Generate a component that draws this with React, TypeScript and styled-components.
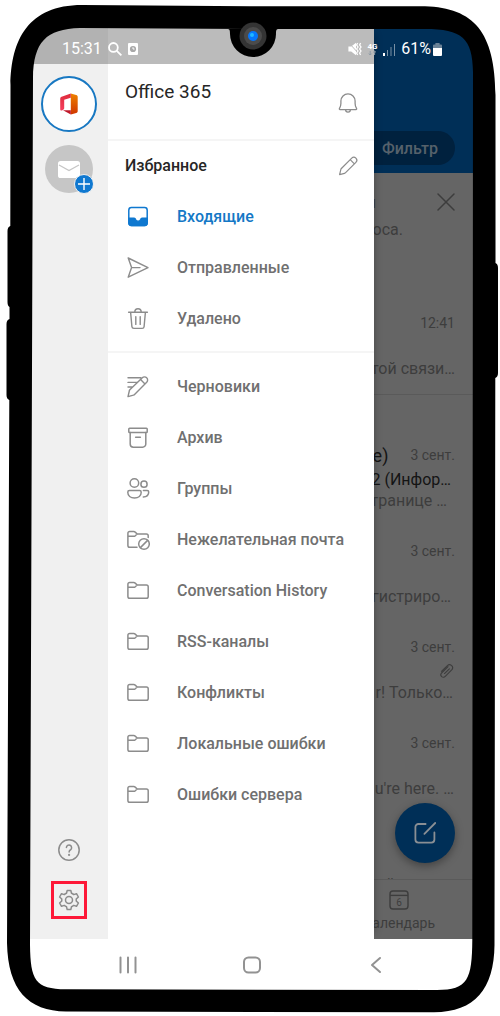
import React from 'react';
import styled, { createGlobalStyle, css } from 'styled-components';

const GlobalStyle = createGlobalStyle`
  *, *::before, *::after { box-sizing: border-box; }
  body {
    margin: 0;
    background: #fff;
    font-family: Roboto, "Noto Sans", sans-serif;
    font-size: 16px;
    color: #212121;
  }
  button { font: inherit; color: inherit; background: none; border: 0; padding: 0; cursor: pointer; }
  ul { list-style: none; margin: 0; padding: 0; }
  h1, h2, p { margin: 0; font-weight: 400; }
  svg { display: block; flex: none; }
`;

/* ---------- device ---------- */

const Device = styled.div`
  position: relative;
  display: flex;
  min-height: 100vh;
  padding: 28px 27px 26px 30px;
`;

const FrameDrawing = styled.svg`
  position: absolute;
  inset: 0;
  width: 100%;
  height: 100%;
  z-index: 5;
  pointer-events: none;
`;

const Camera = styled.svg`
  position: absolute;
  top: 8px;
  left: 50%;
  margin-left: -22px;
  z-index: 6;
`;

const Screen = styled.div`
  position: relative;
  flex: 1;
  min-width: 0;
  display: flex;
  flex-direction: column;
  overflow: hidden;
  border-radius: 30px;
`;

const StatusBar = styled.header`
  position: absolute;
  z-index: 4;
  top: 0;
  left: 0;
  right: 0;
  height: 36px;
  padding: 6px 31px 0 32px;
  display: flex;
  align-items: center;
  justify-content: space-between;
  color: #fff;
  line-height: 20px;
`;

const StatusGroup = styled.div<{ $gap: number }>`
  display: flex;
  align-items: center;
  gap: ${(p) => p.$gap}px;
`;

const Panels = styled.div`
  flex: 1;
  display: flex;
  overflow: hidden;
`;

/* ---------- account rail ---------- */

const Rail = styled.aside`
  width: 78px;
  flex: none;
  display: flex;
  flex-direction: column;
  align-items: center;
  border-top: 36px solid #b2b2b2;
  background: #f0f0f0;
  padding: 12px 0 20px;
  color: #8c8c8c;
`;

const Account = styled.button`
  width: 56px;
  height: 56px;
  display: grid;
  place-items: center;
  border: 2px solid #1878c2;
  border-radius: 50%;
  background: #fff;
`;

const AddAccount = styled.button`
  position: relative;
  width: 48px;
  height: 48px;
  margin-top: 13px;
  display: grid;
  place-items: center;
  border-radius: 50%;
  background: #c6c6c6;
`;

const AddBadge = styled.span`
  position: absolute;
  right: -1px;
  bottom: -1px;
  width: 20px;
  height: 20px;
  display: grid;
  place-items: center;
  border: 1px solid #f0f0f0;
  border-radius: 50%;
  background: #0f78d0;
`;

const RailButton = styled.button<{ $push?: boolean; $marked?: boolean }>`
  width: 36px;
  height: 38px;
  display: grid;
  place-items: center;
  ${(p) => p.$push && css`margin-top: auto; margin-bottom: 12px;`}
  ${(p) => p.$marked && css`border: 3px solid #fd1838;`}
`;

/* ---------- drawer ---------- */

const Drawer = styled.section`
  width: 266px;
  flex: none;
  z-index: 1;
  border-top: 36px solid #bbb;
  background: #fff;
  box-shadow: 6px 0 8px -6px rgba(0, 0, 0, 0.3);
`;

const DrawerHead = styled.div`
  height: 77px;
  padding: 16px 14px 0 17px;
  display: flex;
  justify-content: space-between;
  border-bottom: 2px solid #f5f5f5;
  color: #8c8c8c;
`;

const AccountName = styled.h1`
  font-size: 19px;
  line-height: 24px;
  color: #262626;
`;

const BellButton = styled.button`
  align-self: flex-start;
  margin-top: 11px;
`;

const FavouritesHead = styled.div`
  height: 50px;
  padding: 0 14px 0 17px;
  display: flex;
  align-items: center;
  justify-content: space-between;
  color: #8c8c8c;
`;

const SectionTitle = styled.h2`
  font-size: 16px;
  font-weight: 500;
  line-height: 24px;
  color: #262626;
`;

const FolderList = styled.ul`
  & + & {
    margin-top: 7px;
    padding-top: 8px;
    border-top: 2px solid #f5f5f5;
  }
`;

const FolderButton = styled.button<{ $active?: boolean }>`
  width: 100%;
  height: 51px;
  padding: 0 18px;
  display: flex;
  align-items: center;
  gap: 27px;
  font-weight: 500;
  line-height: 24px;
  white-space: nowrap;
  color: ${(p) => (p.$active ? '#1478c6' : '#707070')};
  svg { color: ${(p) => (p.$active ? '#0f78d0' : '#8c8c8c')}; }
`;

/* ---------- dimmed inbox ---------- */

const Inbox = styled.main`
  flex: 1;
  min-width: 0;
  display: flex;
  flex-direction: column;
  background: #656565;
  color: #3d3d3d;
  white-space: nowrap;
  overflow: hidden;
`;

const InboxHead = styled.div`
  height: 145px;
  flex: none;
  padding: 0 18px 8px 0;
  display: flex;
  align-items: flex-end;
  justify-content: flex-end;
  background: #002f57;
`;

const FilterButton = styled.button`
  height: 34px;
  flex: none;
  padding: 0 17px 0 36px;
  border-radius: 17px;
  background: #00213e;
  color: #56616b;
  font-weight: 500;
`;

const Notice = styled.div`
  height: 125px;
  flex: none;
  padding: 17px 15px 0 0;
`;

const NoticeRow = styled.div`
  display: flex;
  justify-content: flex-end;
  align-items: center;
  gap: 58px;
  height: 24px;
`;

const NoticeText = styled.p`
  display: flex;
  justify-content: flex-end;
  padding-right: 55px;
  line-height: 32px;
`;

const GroupGap = styled.div`
  height: 36px;
  flex: none;
  border-top: 1px solid #5a5a5a;
`;

const MessageList = styled.div`
  flex: 1 1 0;
  min-height: 0;
  overflow: hidden;
`;

const Message = styled.article`
  height: 96px;
  padding: 13px 18px 0 0;
`;

const Line = styled.div<{ $dark?: boolean; $low?: boolean; $inset?: number }>`
  display: flex;
  justify-content: flex-end;
  align-items: center;
  gap: 22px;
  height: ${(p) => (p.$low ? 18 : 24)}px;
  padding-right: ${(p) => p.$inset ?? 0}px;
  color: ${(p) => (p.$dark ? '#141414' : 'inherit')};
  & > * { flex: none; }
`;

const Sender = styled.span`
  font-size: 18px;
  color: #141414;
`;

const Time = styled.time`
  font-size: 14px;
  color: #3d3d3d;
`;

const ComposeButton = styled.button`
  position: absolute;
  right: 18px;
  bottom: 127px;
  width: 60px;
  height: 60px;
  display: grid;
  place-items: center;
  border-radius: 50%;
  background: #002f57;
  color: #8a8f94;
  box-shadow: 0 3px 8px rgba(0, 0, 0, 0.35);
`;

const Tabs = styled.nav`
  height: 60px;
  flex: none;
  display: flex;
  justify-content: flex-end;
  padding: 4px 38px 0 0;
  border-top: 1px solid #5a5a5a;
`;

const TabButton = styled.button`
  flex: none;
  display: flex;
  flex-direction: column;
  align-items: center;
  justify-content: center;
  gap: 3px;
  font-size: 14px;
  line-height: 20px;
`;

/* ---------- system navigation ---------- */

const SystemNav = styled.nav`
  height: 51px;
  flex: none;
  padding: 0 85px 0 86px;
  display: flex;
  align-items: center;
  justify-content: space-between;
  background: #fff;
  color: #929292;
`;

/* ---------- icons ---------- */

const Icon = ({ size = 24, width = 1.5, children }: { size?: number; width?: number; children: React.ReactNode }) => (
  <svg width={size} height={size} viewBox="0 0 24 24" fill="none" stroke="currentColor" strokeWidth={width} strokeLinecap="round" strokeLinejoin="round" aria-hidden="true">
    {children}
  </svg>
);

const InboxIcon = () => (
  <Icon>
    <rect x="2.8" y="2.6" width="18.4" height="17.8" rx="2.6" />
    <path d="M3 13.2h5.2c.9 0 1.1.6 1.3 1.2.4 1.1 1.3 1.900 2.600 1.900s2.200-.8 2.600-1.900c.2-.6.4-1.200 1.300-1.200h5.200v4.600a2.600 2.600 0 0 1-2.600 2.600h-13A2.600 2.600 0 0 1 3 17.800z" fill="currentColor" />
  </Icon>
);
const SentIcon = () => (
  <Icon width={1.4}><path d="M2.2 2 22 11.600 2.200 21.200 5.600 11.600zM5.600 11.600H14" /></Icon>
);
const TrashIcon = () => (
  <Icon width={1.4}><path d="M2.6 5.200h18.800M8.800 5a3.200 3.200 0 0 1 6.400 0M4.600 5.200l1.300 14.400a2 2 0 0 0 2 1.800h8.200a2 2 0 0 0 2-1.800l1.300-14.400M9.800 9.600v7.800M14.200 9.600v7.800" /></Icon>
);
const DraftsIcon = () => (
  <Icon width={1.4}><path d="M2 2.800h13M2 7.400h9M2 12h4.600M2 21.600l1.300-5.600c.1-.6.4-1 .8-1.400L16.300 2.800a3 3 0 0 1 4.400 0 3.100 3.100 0 0 1 0 4.400L8.800 19.200c-.4.400-.8.700-1.400.9zM14.600 4.500l4.400 4.400" /></Icon>
);
const ArchiveIcon = () => (
  <Icon><rect x="2.8" y="2.2" width="18.4" height="4.400" rx=".8" /><path d="M4.2 6.600v11.400a3.200 3.200 0 0 0 3.200 3.200h9.200a3.200 3.200 0 0 0 3.200-3.200V6.600M9.600 11.200h4.800" /></Icon>
);
const GroupsIcon = () => (
  <Icon><circle cx="8.400" cy="6" r="4.300" /><circle cx="18" cy="7.200" r="3.100" /><path d="M3.4 13.600h10.200c1 0 1.600.6 1.600 1.600 0 3.600-2.800 5.800-6.700 5.800s-6.700-2.200-6.700-5.800c0-1 .6-1.600 1.600-1.600zM17.400 13.600h3.800c1 0 1.500.6 1.500 1.500 0 3-2 4.900-5.400 4.900" /></Icon>
);
const FolderIcon = () => (
  <Icon><path d="M1.9 9.200V5.400c0-1.100.7-1.800 1.800-1.800h4.100c.5 0 1 .2 1.400.5l2 1.900h9.200c1.100 0 1.800.7 1.800 1.800v9.600c0 1.100-.7 1.800-1.800 1.800H3.700c-1.100 0-1.800-.7-1.800-1.800zM2 8.300h5.800c.5 0 1-.2 1.400-.5l2-1.800" /></Icon>
);
const JunkIcon = () => (
  <Icon><path d="M11 19.200H3.700c-1.100 0-1.800-.7-1.800-1.800V5.400c0-1.100.7-1.800 1.800-1.800h4.100c.5 0 1 .2 1.400.5l2 1.900h9.200c1.100 0 1.800.7 1.800 1.800v1.600M2 8.300h5.800c.5 0 1-.2 1.400-.5l2-1.800" /><circle cx="18" cy="16" r="5.300" /><path d="m14.400 19.600 7.200-7.200" /></Icon>
);
const BellIcon = () => (
  <Icon width={1.3}><path d="M4 18.600c-.6 0-.8-.5-.6-1 .9-1.600 1.500-3 1.500-5.200V10a7.100 7.100 0 0 1 14.200 0v2.400c0 2.200.6 3.600 1.500 5.200.2.500 0 1-.6 1zM9.600 18.800a2.400 2.400 0 0 0 4.800 0" /></Icon>
);
const PencilIcon = () => (
  <Icon width={1.2}><path d="m3.600 20.600 1.200-5c.1-.4.3-.8.6-1.100L15.700 4.100a2.900 2.900 0 0 1 4.200 4.200L9.600 18.700c-.3.300-.7.500-1.100.6zM14.200 5.700l4.200 4.200" /></Icon>
);
const HelpIcon = () => (
  <Icon><circle cx="12" cy="12" r="10.200" /><path d="M9.400 9.600a2.600 2.600 0 1 1 4.300 2c-.9.8-1.600 1.200-1.600 2.500" /><circle cx="12.1" cy="16.900" r=".4" fill="currentColor" /></Icon>
);
const GearIcon = () => (
  <Icon><circle cx="12" cy="12" r="3.500" /><path d="M10.200 2.400h3.600l.7 2.900a7 7 0 0 1 2.200 1.300l2.800-.9 1.900 3.300-2.200 2a7 7 0 0 1 0 2l2.200 2-1.900 3.300-2.800-.9a7 7 0 0 1-2.200 1.300l-.7 2.900h-3.600l-.7-2.900a7 7 0 0 1-2.200-1.300l-2.800.9L2.600 15l2.200-2a7 7 0 0 1 0-2L2.600 9l1.900-3.300 2.800.9a7 7 0 0 1 2.200-1.300z" /></Icon>
);
const CloseIcon = () => <Icon width={1.5}><path d="m4 4 16 16M20 4 4 20" /></Icon>;
const ClipIcon = () => (
  <Icon size={16} width={1.6}><path d="m3.600 12.400 9-8.400a4.600 4.600 0 0 1 7.200 5.600L9.400 20.200a3.800 3.800 0 0 1-5.600-5.200l9.800-9.400M8.200 15.800l7.400-7" /></Icon>
);
const ComposeIcon = () => (
  <Icon width={1.8}><path d="M12.600 3H5.400A3 3 0 0 0 2.400 6v12.600a3 3 0 0 0 3 3h13a3 3 0 0 0 3-3v-7.200M11.400 12.800 22.200 2" /></Icon>
);
const CalendarIcon = () => (
  <svg width="20" height="20" viewBox="0 0 20 20" fill="none" stroke="currentColor" strokeWidth="1.400" aria-hidden="true">
    <rect x="1" y="1" width="18" height="18" rx="3" />
    <path d="M1 5.400h18" />
    <text x="10" y="15.600" textAnchor="middle" fontSize="10" fontFamily="Roboto, sans-serif" fill="currentColor" stroke="none">6</text>
  </svg>
);
const OfficeLogo = () => (
  <svg width="18" height="22" viewBox="0 0 18 22" aria-hidden="true">
    <defs>
      <linearGradient id="officeRight" x1="0" y1="0" x2="0" y2="1"><stop offset="0" stopColor="#ee8200" /><stop offset="1" stopColor="#cf3400" /></linearGradient>
      <linearGradient id="officeLeft" x1="0" y1="0" x2="0" y2="1"><stop offset="0" stopColor="#de2b3c" /><stop offset="1" stopColor="#f5405e" /></linearGradient>
    </defs>
    <path d="M10.800.4 16.200 2c1 .3 1.500 1 1.500 2v14c0 1-.5 1.700-1.500 2l-5.400 1.600z" fill="url(#officeRight)" />
    <path d="M10.800.4v4.400L4.200 6.800v8.400c0 .6-.2 1-.7 1.300l-1.500.9C1 17.900.2 17.200.2 16.200V6c0-1.100.5-1.800 1.400-2.200z" fill="url(#officeLeft)" />
    <path d="M3 17.300h7.800v4.300z" fill="#c0182a" />
  </svg>
);
const MailIcon = () => (
  <svg width="22" height="17" viewBox="0 0 22 17" aria-hidden="true">
    <rect width="22" height="17" rx="2.600" fill="#fff" />
    <path d="m1 4 10 5.600L21 4" fill="none" stroke="#c6c6c6" strokeWidth="1.300" />
  </svg>
);
const PlusIcon = () => (
  <svg width="14" height="14" viewBox="0 0 14 14" fill="none" stroke="#fff" strokeWidth="1.400" aria-hidden="true"><path d="M7 1v12M1 7h12" /></svg>
);
const SearchGlyph = () => (
  <svg width="14" height="14" viewBox="0 0 14 14" fill="none" stroke="#fff" strokeWidth="1.800" aria-hidden="true"><circle cx="5.400" cy="5.400" r="4.400" /><path d="m8.800 8.800 4.600 4.600" /></svg>
);
const ClockGlyph = () => (
  <svg width="10" height="12" viewBox="0 0 10 12" aria-hidden="true"><rect width="10" height="12" rx="1" fill="#fff" /><circle cx="5" cy="6" r="3.100" fill="#a8a8a8" /><path d="M5 4.200V6h1.600" fill="none" stroke="#fff" /></svg>
);
const MuteGlyph = () => (
  <svg width="14" height="14" viewBox="0 0 14 14" aria-hidden="true">
    <path d="M.4 4.400h2.800L8 .8v12.400L3.200 9.600H.4z" fill="#fff" />
    <path d="m1 1 11 12" stroke="#bbb" strokeWidth="1" />
    <path d="m9.600 1-1 2 1.400 2-1.400 2 1.400 2-1.400 2 1 2M12.600 1l-1 2 1.400 2-1.400 2 1.400 2-1.400 2 1 2" fill="none" stroke="#fff" strokeWidth="1.300" />
  </svg>
);
const NetworkGlyph = () => (
  <svg width="11" height="14" viewBox="0 0 11 14" aria-hidden="true">
    <text x="5.500" y="7" textAnchor="middle" fontSize="8" fontWeight="700" fontFamily="Roboto, sans-serif" fill="#fff">4G</text>
    <path d="M3.200 9v4M1.800 11.600 3.200 13l1.400-1.400M7.600 13V9M6.200 10.400 7.600 9 9 10.400" fill="none" stroke="#8d9aa5" />
  </svg>
);
const SignalGlyph = () => (
  <svg width="13" height="13" viewBox="0 0 13 13" aria-hidden="true">
    <path d="M0 10h2v3H0z" fill="#fff" />
    <path d="M4 7h1v6H4zM7.500 4h1v9h-1zM11 1h1v12h-1z" fill="#7890a4" />
  </svg>
);
const BatteryGlyph = () => (
  <svg width="9" height="13" viewBox="0 0 9 13" aria-hidden="true">
    <path d="M2.400 0h4.200v1.500H8a1 1 0 0 1 1 1V5H0V2.500a1 1 0 0 1 1-1h1.400z" fill="#6a8297" />
    <path d="M0 5h9v7a1 1 0 0 1-1 1H1a1 1 0 0 1-1-1z" fill="#fff" />
  </svg>
);

/* ---------- data ---------- */

type Folder = { name: string; icon: () => React.ReactElement; active?: boolean };

const favourites: Folder[] = [
  { name: 'Входящие', icon: InboxIcon, active: true },
  { name: 'Отправленные', icon: SentIcon },
  { name: 'Удалено', icon: TrashIcon },
];

const folders: Folder[] = [
  { name: 'Черновики', icon: DraftsIcon },
  { name: 'Архив', icon: ArchiveIcon },
  { name: 'Группы', icon: GroupsIcon },
  { name: 'Нежелательная почта', icon: JunkIcon },
  { name: 'Conversation History', icon: FolderIcon },
  { name: 'RSS-каналы', icon: FolderIcon },
  { name: 'Конфликты', icon: FolderIcon },
  { name: 'Локальные ошибки', icon: FolderIcon },
  { name: 'Ошибки сервера', icon: FolderIcon },
];

type Mail = { time?: string; sender?: string; subject?: string; preview: string; inset?: number; clip?: boolean };

const mails: Mail[] = [
  { time: '3 сент.', sender: 'е)', subject: '2 (Инфор…', preview: 'транице …', inset: 8 },
  { time: '3 сент.', preview: 'гистриро…', inset: 4 },
  { time: '3 сент.', clip: true, preview: 'r! Только…', inset: 2 },
  { time: '3 сент.', preview: "u're here. …", inset: 1 },
  { preview: 'й', inset: 60 },
];

const MailRow = ({ mail }: { mail: Mail }) => (
  <Message>
    <Line>
      {mail.sender && <Sender>{mail.sender}</Sender>}
      {mail.time && <Time>{mail.time}</Time>}
    </Line>
    <Line $dark={!mail.clip} $inset={mail.clip ? 0 : 4}>
      {mail.subject && <span>{mail.subject}</span>}
      {mail.clip && <ClipIcon />}
    </Line>
    <Line $low $inset={mail.inset}><span>{mail.preview}</span></Line>
  </Message>
);

const Folders = ({ items }: { items: Folder[] }) => (
  <FolderList>
    {items.map(({ name, icon: Glyph, active }) => (
      <li key={name}>
        <FolderButton $active={active}><Glyph />{name}</FolderButton>
      </li>
    ))}
  </FolderList>
);

export default function App() {
  return (
    <>
      <GlobalStyle />
      <Device>
        <FrameDrawing viewBox="0 0 500 1016" preserveAspectRatio="none" aria-hidden="true">
          <path
            fillRule="evenodd"
            d="M10.500 85C11 40 28 5 82 5L250 6.300H425C474 8 495 32 495.500 95V263Q498 264 498 268V373Q498 377 495.300 378L494.500 945C494 989 475 1012 434 1012.300L66 1011.500C28 1011 8 990 7 943L9.300 400Q6.500 399 6.500 395V324Q6.500 320 9.500 319V307Q7.500 306 7.500 302V231Q7.500 227 10.300 226ZM33 78C33.500 42 46 29 80 28L250 29H425C462 29 472.500 38 473 72L472.300 940C472 979 468 990 437 990L66 989.300C35 989 30.500 980 30 945Z"
          />
        </FrameDrawing>
        <Camera width="50" height="50" viewBox="0 0 50 50" aria-hidden="true">
          <path d="M0 21h50c-2 0-2 3-2 5a23 23 0 0 1-46 0c0-2 0-5-2-5z" />
          <circle cx="25" cy="28" r="13.500" fill="#343434" />
          <circle cx="25" cy="28" r="9" fill="#4b4b4b" />
          <circle cx="25" cy="28" r="5" fill="#0677fb" />
          <circle cx="24" cy="27" r="2" fill="#20b8ff" />
        </Camera>
        <Screen>
          <StatusBar>
            <StatusGroup $gap={6}><span>15:31</span><SearchGlyph /><ClockGlyph /></StatusGroup>
            <StatusGroup $gap={5}>
              <MuteGlyph /><NetworkGlyph /><SignalGlyph />
              <StatusGroup $gap={2}><span>61%</span><BatteryGlyph /></StatusGroup>
            </StatusGroup>
          </StatusBar>
          <Panels>
            <Rail>
              <Account aria-label="Office 365"><OfficeLogo /></Account>
              <AddAccount aria-label="Добавить учетную запись">
                <MailIcon />
                <AddBadge><PlusIcon /></AddBadge>
              </AddAccount>
              <RailButton $push aria-label="Справка"><HelpIcon /></RailButton>
              <RailButton $marked aria-label="Параметры"><GearIcon /></RailButton>
            </Rail>
            <Drawer>
              <DrawerHead>
                <AccountName>Office 365</AccountName>
                <BellButton aria-label="Уведомления"><BellIcon /></BellButton>
              </DrawerHead>
              <FavouritesHead>
                <SectionTitle>Избранное</SectionTitle>
                <button aria-label="Изменить"><PencilIcon /></button>
              </FavouritesHead>
              <Folders items={favourites} />
              <Folders items={folders} />
            </Drawer>
            <Inbox>
              <InboxHead><FilterButton>Фильтр</FilterButton></InboxHead>
              <Notice>
                <NoticeRow><span>я</span><button aria-label="Закрыть"><CloseIcon /></button></NoticeRow>
                <NoticeText>роса.</NoticeText>
              </Notice>
              <MailRow mail={{ time: '12:41', preview: 'той связи…' }} />
              <GroupGap />
              <MessageList>
                {mails.map((mail, i) => <MailRow key={i} mail={mail} />)}
              </MessageList>
              <Tabs><TabButton><CalendarIcon />Календарь</TabButton></Tabs>
            </Inbox>
          </Panels>
          <ComposeButton aria-label="Написать"><ComposeIcon /></ComposeButton>
          <SystemNav>
            <button aria-label="Последние"><Icon width={2}><path d="M4.500 4.500v15M12 4.500v15M19.500 4.500v15" /></Icon></button>
            <button aria-label="Домой"><Icon width={2}><rect x="4" y="4.500" width="16" height="15" rx="4.500" /></Icon></button>
            <button aria-label="Назад"><Icon width={2}><path d="m16 5-8 7 8 7" /></Icon></button>
          </SystemNav>
        </Screen>
      </Device>
    </>
  );
}
